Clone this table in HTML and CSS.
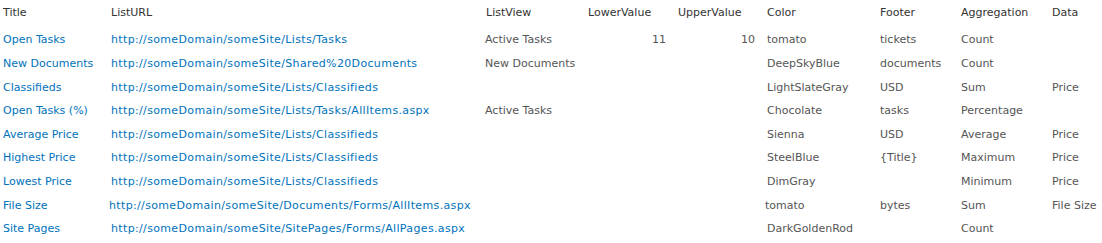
FILE: index.html
```html
<!DOCTYPE html>
<html>
<head>
<meta charset="utf-8">
<link rel="stylesheet" href="styles.css">
</head>
<body>
<table class="grid">
  <colgroup>
    <col class="c-title"><col class="c-url"><col class="c-view"><col class="c-low"><col class="c-up"><col class="c-color"><col class="c-footer"><col class="c-agg"><col class="c-data">
  </colgroup>
  <thead>
    <tr>
      <th>Title</th><th>ListURL</th><th class="h-view">ListView</th><th>LowerValue</th><th>UpperValue</th><th>Color</th><th>Footer</th><th>Aggregation</th><th>Data</th>
    </tr>
  </thead>
  <tbody>
    <tr><td class="link">Open Tasks</td><td class="link url">http://someDomain/someSite/Lists/Tasks</td><td>Active Tasks</td><td class="num">11</td><td class="num">10</td><td>tomato</td><td>tickets</td><td>Count</td><td></td></tr>
    <tr><td class="link">New Documents</td><td class="link url">http://someDomain/someSite/Shared%20Documents</td><td>New Documents</td><td class="num"></td><td class="num"></td><td>DeepSkyBlue</td><td>documents</td><td>Count</td><td></td></tr>
    <tr><td class="link">Classifieds</td><td class="link url">http://someDomain/someSite/Lists/Classifieds</td><td></td><td class="num"></td><td class="num"></td><td>LightSlateGray</td><td>USD</td><td>Sum</td><td>Price</td></tr>
    <tr><td class="link">Open Tasks (%)</td><td class="link url">http://someDomain/someSite/Lists/Tasks/AllItems.aspx</td><td>Active Tasks</td><td class="num"></td><td class="num"></td><td>Chocolate</td><td>tasks</td><td>Percentage</td><td></td></tr>
    <tr><td class="link">Average Price</td><td class="link url">http://someDomain/someSite/Lists/Classifieds</td><td></td><td class="num"></td><td class="num"></td><td>Sienna</td><td>USD</td><td>Average</td><td>Price</td></tr>
    <tr><td class="link">Highest Price</td><td class="link url">http://someDomain/someSite/Lists/Classifieds</td><td></td><td class="num"></td><td class="num"></td><td>SteelBlue</td><td>{Title}</td><td>Maximum</td><td>Price</td></tr>
    <tr><td class="link">Lowest Price</td><td class="link url">http://someDomain/someSite/Lists/Classifieds</td><td></td><td class="num"></td><td class="num"></td><td>DimGray</td><td></td><td>Minimum</td><td>Price</td></tr>
    <tr class="shift"><td class="link">File Size</td><td class="link url nudge">http://someDomain/someSite/Documents/Forms/AllItems.aspx</td><td></td><td class="num"></td><td class="num"></td><td class="nudge">tomato</td><td>bytes</td><td>Sum</td><td>File Size</td></tr>
    <tr><td class="link">Site Pages</td><td class="link url">http://someDomain/someSite/SitePages/Forms/AllPages.aspx</td><td></td><td class="num"></td><td class="num"></td><td>DarkGoldenRod</td><td></td><td>Count</td><td></td></tr>
  </tbody>
</table>
</body>
</html>
```
FILE: styles.css
```css
html, body {
  margin: 0;
  padding: 0;
  background: #ffffff;
}
.grid {
  table-layout: fixed;
  border-collapse: collapse;
  width: 1102px;
  font-family: "DejaVu Sans", Verdana, sans-serif;
  font-size: 11px;
  color: #555555;
}
.c-title { width: 108px; }
.c-url { width: 374px; }
.c-view { width: 103px; }
.c-low { width: 90px; }
.c-up { width: 89px; }
.c-color { width: 113px; }
.c-footer { width: 81px; }
.c-agg { width: 91px; }
.c-data { width: 53px; }
.grid th {
  font-weight: normal;
  text-align: left;
  color: #333333;
  height: 24px;
  padding: 0 3px 4px 3px;
  vertical-align: middle;
  white-space: nowrap;
}
.grid th.h-view { padding-left: 4px; }
.grid td {
  height: 23.625px;
  padding: 0 3px;
  vertical-align: middle;
  white-space: nowrap;
  overflow: visible;
}
.grid td.link { color: #0072bc; }
.grid td.url { letter-spacing: 0.35px; }
.grid td.nudge { text-indent: -2px; }
.grid td.num { text-align: right; padding-right: 9px; }
```
